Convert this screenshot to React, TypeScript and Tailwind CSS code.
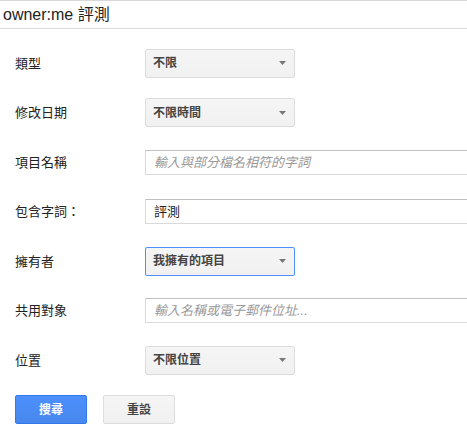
const Arrow = () => (
  <svg width="7" height="4" viewBox="0 0 7 4" className="absolute right-[8px] top-1/2 -translate-y-1/2">
    <path d="M0 0h7L3.5 4z" fill="#777" />
  </svg>
);

const Select = ({ value, focused }: { value: string; focused?: boolean }) => (
  <div
    className={
      "relative w-[150px] h-[29px] rounded-[2px] border bg-gradient-to-b from-[#f5f5f5] to-[#f1f1f1] flex items-center pl-[7px] text-[12px] font-bold text-[#444] " +
      (focused ? "border-[#4d90fe]" : "border-[#dcdcdc]")
    }
  >
    {value}
    <Arrow />
  </div>
);

const Input = ({ value, placeholder }: { value?: string; placeholder?: string }) => (
  <div className="w-[360px] shrink-0 h-[25px] border border-[#d9d9d9] border-t-[#c0c0c0] bg-white flex items-center pl-[8px] text-[13px]">
    {value ? (
      <span className="text-[#222]">{value}</span>
    ) : (
      <span className="italic text-[#999]">{placeholder}</span>
    )}
  </div>
);

const Row = ({ label, children }: { label: string; children: React.ReactNode }) => (
  <div className="h-[49.5px] flex items-center">
    <div className="w-[130px] shrink-0 text-[13px] text-[#222]">{label}</div>
    {children}
  </div>
);

export default function App() {
  return (
    <div
      className="w-[467px] h-[434px] overflow-hidden bg-white"
      style={{ fontFamily: '"Liberation Sans", Arial, "Noto Sans CJK TC", sans-serif' }}
    >
      {/* search box */}
      <div className="h-[29px] border-t border-b border-[#d9d9d9] flex items-center pl-[3px] text-[16px] text-[#222]">
        owner:me 評測
      </div>

      <div className="pl-[15px] pt-[9.5px]">
        <Row label="類型">
          <Select value="不限" />
        </Row>
        <Row label="修改日期">
          <Select value="不限時間" />
        </Row>
        <Row label="項目名稱">
          <Input placeholder="輸入與部分檔名相符的字詞" />
        </Row>
        <Row label="包含字詞：">
          <Input value="評測" />
        </Row>
        <Row label="擁有者">
          <Select value="我擁有的項目" focused />
        </Row>
        <Row label="共用對象">
          <Input placeholder="輸入名稱或電子郵件位址..." />
        </Row>
        <Row label="位置">
          <Select value="不限位置" />
        </Row>

        <div className="h-[49.5px] flex items-center gap-[16px]">
          <button className="w-[72px] h-[29px] rounded-[2px] border border-[#3079ed] bg-gradient-to-b from-[#4d90fe] to-[#4787ed] text-white text-[12px] font-bold">
            搜尋
          </button>
          <button className="w-[72px] h-[29px] rounded-[2px] border border-[#dcdcdc] bg-gradient-to-b from-[#f5f5f5] to-[#f1f1f1] text-[#444] text-[12px] font-bold">
            重設
          </button>
        </div>
      </div>
    </div>
  );
}
